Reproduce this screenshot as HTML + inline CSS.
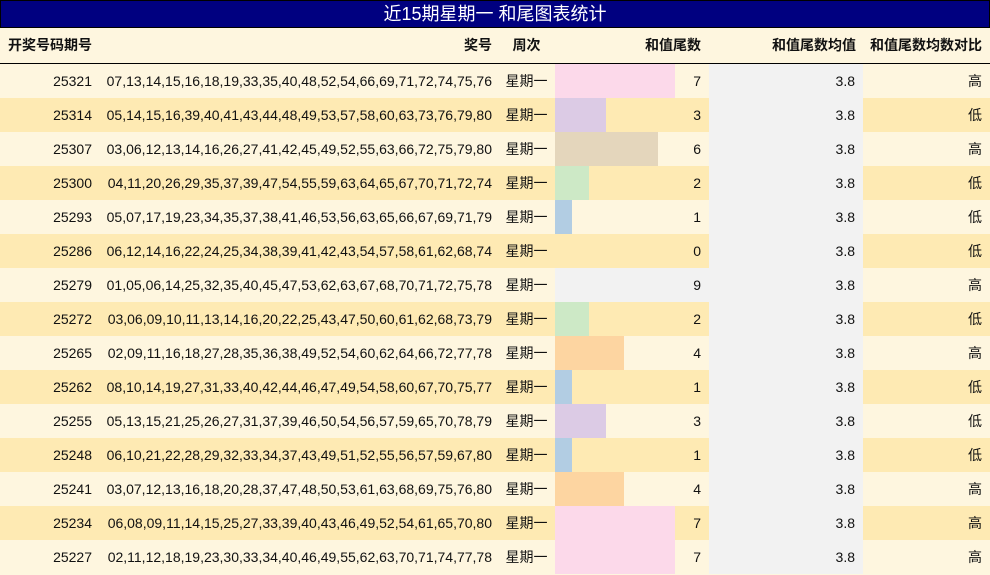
<!DOCTYPE html><html><head><meta charset="utf-8"><style>
*{margin:0;padding:0;box-sizing:border-box}
body{width:990px;height:575px;background:#fef6df;font-family:"Liberation Sans","Noto Sans CJK SC",sans-serif;font-size:14px;color:#111;position:relative;overflow:hidden}
.t{position:absolute;left:0;top:0;width:990px;height:28px;background:#000080;border:1px solid #000;color:#fff;font-size:18px;text-align:center;line-height:26px}
.h{position:absolute;top:28px;height:36px;width:990px;border-bottom:1.5px solid #000;font-weight:bold}
.c{position:absolute;line-height:34px;height:34px;white-space:nowrap}
.r{position:absolute;left:0;width:990px;height:34px}
</style></head><body>
<div class="t">近15期星期一 和尾图表统计</div>
<div class="h">
<div class="c" style="left:8px">开奖号码期号</div>
<div class="c" style="right:498px">奖号</div>
<div class="c" style="left:498px;width:57px;text-align:center">周次</div>
<div class="c" style="right:289px">和值尾数</div>
<div class="c" style="right:134px">和值尾数均值</div>
<div class="c" style="right:8px">和值尾数均数对比</div>
</div>
<div id="rows"></div>
<script>
var d=[["25321","07,13,14,15,16,18,19,33,35,40,48,52,54,66,69,71,72,74,75,76",7,"高"],
["25314","05,14,15,16,39,40,41,43,44,48,49,53,57,58,60,63,73,76,79,80",3,"低"],
["25307","03,06,12,13,14,16,26,27,41,42,45,49,52,55,63,66,72,75,79,80",6,"高"],
["25300","04,11,20,26,29,35,37,39,47,54,55,59,63,64,65,67,70,71,72,74",2,"低"],
["25293","05,07,17,19,23,34,35,37,38,41,46,53,56,63,65,66,67,69,71,79",1,"低"],
["25286","06,12,14,16,22,24,25,34,38,39,41,42,43,54,57,58,61,62,68,74",0,"低"],
["25279","01,05,06,14,25,32,35,40,45,47,53,62,63,67,68,70,71,72,75,78",9,"高"],
["25272","03,06,09,10,11,13,14,16,20,22,25,43,47,50,60,61,62,68,73,79",2,"低"],
["25265","02,09,11,16,18,27,28,35,36,38,49,52,54,60,62,64,66,72,77,78",4,"高"],
["25262","08,10,14,19,27,31,33,40,42,44,46,47,49,54,58,60,67,70,75,77",1,"低"],
["25255","05,13,15,21,25,26,27,31,37,39,46,50,54,56,57,59,65,70,78,79",3,"低"],
["25248","06,10,21,22,28,29,32,33,34,37,43,49,51,52,55,56,57,59,67,80",1,"低"],
["25241","03,07,12,13,16,18,20,28,37,47,48,50,53,61,63,68,69,75,76,80",4,"高"],
["25234","06,08,09,11,14,15,25,27,33,39,40,43,46,49,52,54,61,65,70,80",7,"高"],
["25227","02,11,12,18,19,23,30,33,34,40,46,49,55,62,63,70,71,74,77,78",7,"高"]];
var col={7:"#fcd9ea",3:"#dccbe5",6:"#e4d6bc",2:"#cde9c6",1:"#b2cde3",4:"#fdd5a1",9:"#f2f2f2",0:"transparent"};
var h="";
d.forEach(function(r,i){var y=64+i*34,bg=i%2?"#feeab3":"#fef6df";
h+='<div class="r" style="top:'+y+'px;background:'+bg+'">'+
'<div class="c" style="right:898px">'+r[0]+'</div>'+
'<div class="c" style="right:498px">'+r[1]+'</div>'+
'<div class="c" style="left:498px;width:57px;text-align:center;background:'+bg+'">星期一</div>'+
'<div class="c" style="left:555px;width:'+Math.round(r[2]*120/7)+'px;background:'+col[r[2]]+'"></div>'+
'<div class="c" style="right:289px">'+r[2]+'</div>'+
'<div class="c" style="left:709px;width:154px;background:#f2f2f2;text-align:right;padding-right:8px">3.8</div>'+
'<div class="c" style="right:8px">'+r[3]+'</div></div>';});
document.getElementById("rows").innerHTML=h;
</script>
</body></html>
